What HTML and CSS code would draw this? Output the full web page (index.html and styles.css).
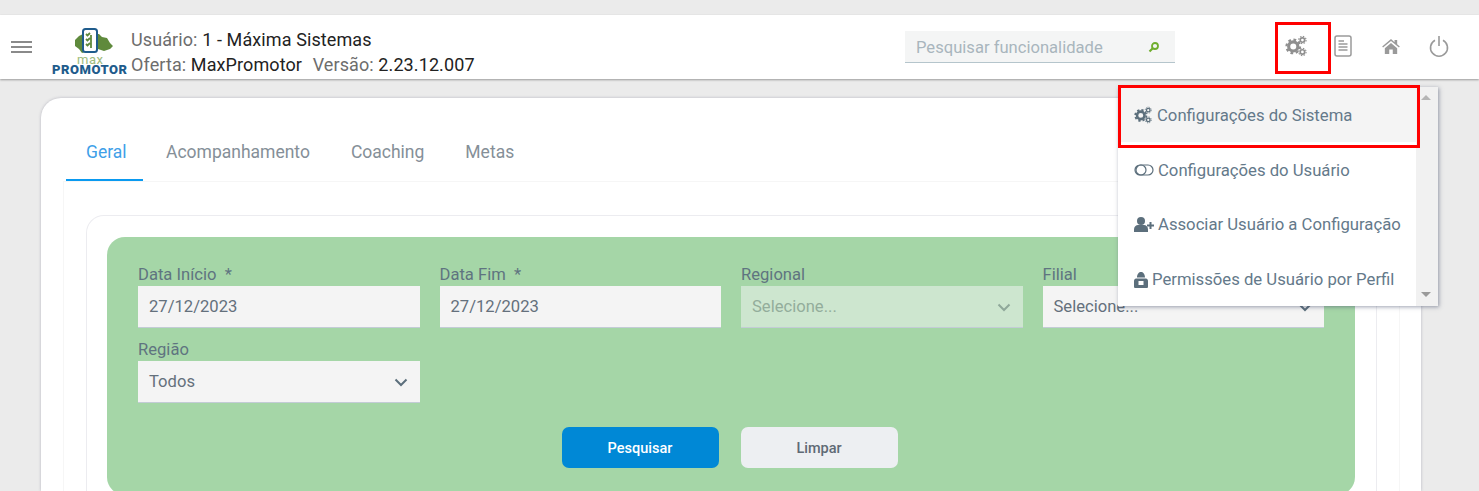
FILE: index.html
```html
<!DOCTYPE html>
<html lang="pt-BR">
<head>
  <meta charset="UTF-8">
  <title>MaxPromotor</title>
  <link rel="stylesheet" href="styles.css">
</head>
<body>
  <svg class="defs" width="0" height="0">
    <symbol id="gears" viewBox="0 0 24 24">
      <circle cx="9" cy="12.5" r="5" fill="none" stroke="currentColor" stroke-width="3.4"/>
      <circle cx="9" cy="12.5" r="7.4" fill="none" stroke="currentColor" stroke-width="2.4" stroke-dasharray="3 2.81"/>
      <circle cx="19" cy="5.5" r="2.4" fill="none" stroke="currentColor" stroke-width="1.8"/>
      <circle cx="19" cy="5.5" r="4" fill="none" stroke="currentColor" stroke-width="1.2" stroke-dasharray="1.6 1.54"/>
      <circle cx="19" cy="18.5" r="2.4" fill="none" stroke="currentColor" stroke-width="1.8"/>
      <circle cx="19" cy="18.5" r="4" fill="none" stroke="currentColor" stroke-width="1.2" stroke-dasharray="1.6 1.54"/>
    </symbol>
    <symbol id="chevron" viewBox="0 0 14 9">
      <path d="M1.5 1.5 7 7l5.500-5.500" fill="none" stroke="currentColor" stroke-width="2"/>
    </symbol>
  </svg>

  <header class="topbar">
    <div class="burger"><span></span><span></span><span></span></div>
    <svg class="logo" width="76" height="48" viewBox="0 0 76 48">
      <path d="M23 12l4-4 4-2h16l3 3 5 1 3 5 3 3-3 3-6 2-6-2-2 3H33l-3 1-3-4-4-3z" fill="#5f8a3c"/>
      <rect x="31" y="1" width="14" height="23" rx="2.500" fill="#fff" stroke="#1f5c8c" stroke-width="2"/>
      <path d="M34 6l1.500 1.500L38 5M34 11l1.500 1.500L38 10M34 16l1.500 1.500L38 15M39 7v13" fill="none" stroke="#5f8a3c" stroke-width="1.800"/>
      <text class="logo-text"><tspan class="logo-max" x="25" y="36" textLength="26">max</tspan><tspan class="logo-name" x="0" y="46" textLength="75">PROMOTOR</tspan></text>
    </svg>
    <div class="session">
      <p>Usuário: <b>1 - Máxima Sistemas</b></p>
      <p>Oferta: <b>MaxPromotor</b> <span class="version">Versão: <b>2.23.12.007</b></span></p>
    </div>
    <div class="search">
      <span>Pesquisar funcionalidade</span>
      <svg width="12" height="12" viewBox="0 0 12 12">
        <circle cx="7" cy="5" r="3" fill="none" stroke="#6fae2d" stroke-width="1.800"/>
        <path d="M5 7 1.500 10.500" stroke="#6fae2d" stroke-width="2.200"/>
      </svg>
    </div>
    <nav class="actions">
      <div class="action action-marked">
        <svg width="22" height="22"><use href="#gears"/></svg>
      </div>
      <div class="action">
        <svg width="18" height="22" viewBox="0 0 18 22">
          <rect x="1" y="1" width="16" height="20" rx="2" fill="none" stroke="currentColor" stroke-width="1.500"/>
          <path d="M4.500 6H10M4.500 9h9M4.500 12h9M4.500 15h9" stroke="currentColor" stroke-width="1.500"/>
        </svg>
      </div>
      <div class="action">
        <svg width="18" height="15" viewBox="0 0 20 17">
          <path d="M10 0 0 8.500l1 1.200L10 2.300l9 7.400 1-1.200-3-2.500V1h-3v2.800zM3 10.500V17h5v-5h4v5h5v-6.500L10 4.500z" fill="currentColor"/>
        </svg>
      </div>
      <div class="action">
        <svg width="20" height="21" viewBox="0 0 20 21">
          <path d="M6 4.200a8.500 8.500 0 1 0 8 0M10 0v10" fill="none" stroke="currentColor" stroke-width="1.600"/>
        </svg>
      </div>
    </nav>
  </header>

  <ul class="menu">
    <li class="menu-item menu-item-marked">
      <svg width="18" height="18"><use href="#gears"/></svg>Configurações do Sistema
    </li>
    <li class="menu-item">
      <svg width="20" height="12" viewBox="0 0 20 12">
        <rect x="1" y="1" width="18" height="10" rx="5" fill="none" stroke="currentColor" stroke-width="1.200"/>
        <circle cx="7" cy="6" r="5" fill="none" stroke="currentColor" stroke-width="1.200"/>
      </svg>Configurações do Usuário
    </li>
    <li class="menu-item">
      <svg width="20" height="15" viewBox="0 0 20 15">
        <circle cx="7" cy="4" r="4" fill="currentColor"/>
        <path d="M0 15v-2.500C0 9.500 2 8 4 8h6c2 0 4 1.500 4 4.500V15z" fill="currentColor"/>
        <path d="M13 8.500h7M16.500 5v7" stroke="currentColor" stroke-width="2"/>
      </svg>Associar Usuário a Configuração
    </li>
    <li class="menu-item">
      <svg width="14" height="16" viewBox="0 0 14 16">
        <path d="M3 5.500C3 2 5 0 7 0s4 2 4 5.500zM2 6.500h10c1 0 2 1 2 2.500v5.500c0 1-.5 1.500-1.500 1.500h-11C.5 16 0 15.500 0 14.500V9c0-1.500 1-2.500 2-2.500z" fill="currentColor"/>
        <rect x="4.500" y="9" width="5" height="4" fill="#fff"/>
      </svg>Permissões de Usuário por Perfil
    </li>
    <li class="menu-scroll"><i class="arrow-up"></i><i class="arrow-down"></i></li>
  </ul>

  <main class="card">
    <div class="tabs">
      <a class="tab tab-active">Geral</a>
      <a class="tab">Acompanhamento</a>
      <a class="tab">Coaching</a>
      <a class="tab">Metas</a>
    </div>
    <section class="pane">
      <div class="inner">
        <form class="filters">
          <div class="fields">
            <div class="field">
              <label>Data Início&nbsp; *</label>
              <div class="control">27/12/2023</div>
            </div>
            <div class="field">
              <label>Data Fim&nbsp; *</label>
              <div class="control">27/12/2023</div>
            </div>
            <div class="field">
              <label>Regional</label>
              <div class="control control-disabled">Selecione...
                <svg width="14" height="9"><use href="#chevron"/></svg>
              </div>
            </div>
            <div class="field">
              <label>Filial</label>
              <div class="control">Selecione...
                <svg width="14" height="9"><use href="#chevron"/></svg>
              </div>
            </div>
            <div class="field">
              <label>Região</label>
              <div class="control">Todos
                <svg width="14" height="9"><use href="#chevron"/></svg>
              </div>
            </div>
          </div>
          <div class="buttons">
            <button type="button" class="btn btn-primary">Pesquisar</button>
            <button type="button" class="btn">Limpar</button>
          </div>
        </form>
      </div>
    </section>
  </main>
</body>
</html>
```

FILE: styles.css
```css
* {
  box-sizing: border-box;
}

html, body {
  height: 491px;
  overflow: hidden;
}

body {
  margin: 0;
  padding-top: 15px;
  position: relative;
  background-color: #ebebeb;
  font-family: Roboto, "Liberation Sans", sans-serif;
  color: #6b7b86;
}

.defs {
  position: absolute;
}

.topbar {
  height: 64px;
  display: flex;
  align-items: center;
  background-color: #fff;
  box-shadow: 0 1px 2px rgba(0, 0, 0, 0.35);
  position: relative;
  z-index: 2;
}

.burger {
  width: 21px;
  margin-left: 11px;
  display: flex;
  flex-direction: column;
  gap: 3px;
}

.burger span {
  height: 2px;
  background-color: #8a8a8a;
}

.logo {
  flex: none;
  margin: 10px 0 0 20px;
}

.logo-text {
  font-size: 13px;
}

.logo-max {
  fill: #9dbb7c;
}

.logo-name {
  font-weight: 900;
  fill: #1f5c8c;
}

.session {
  margin-left: 3px;
  padding-top: 10px;
  font-size: 18px;
  letter-spacing: 0.1px;
  color: #6d6d6d;
}

.session p {
  margin: 0;
  line-height: 25px;
}

.session b {
  font-weight: 400;
  color: #222;
}

.version {
  margin-left: 6px;
}

.search {
  width: 270px;
  height: 32px;
  margin-left: auto;
  margin-top: -1px;
  padding: 2px 15px 0 11px;
  display: flex;
  align-items: center;
  justify-content: space-between;
  background-color: #f4f5f5;
  border-bottom: 1px solid #b5c5cc;
  font-size: 16.6px;
  color: #a9b5bd;
}

.actions {
  display: flex;
  align-items: center;
  width: 304px;
  padding-left: 96px;
}

.action {
  width: 48px;
  height: 52px;
  margin-top: -2px;
  flex: none;
  display: flex;
  align-items: center;
  justify-content: center;
  color: #9a9a9a;
}

.action-marked {
  width: 56px;
  margin: 2px -12px 0 4px;
  padding: 0 0 4px 7px;
  justify-content: flex-start;
  border: 3px solid #f00;
  color: #8f8f8f;
}

.menu {
  position: absolute;
  top: 87px;
  left: 1118px;
  width: 320px;
  height: 219px;
  margin: 0;
  padding: 0 22px 0 0;
  list-style: none;
  background-color: #fff;
  box-shadow: 1px 1px 4px rgba(60, 70, 100, 0.5);
  z-index: 3;
  font-size: 16.7px;
  color: #64798a;
}

.menu-item {
  height: 54.75px;
  padding: 2px 0 0 16px;
  display: flex;
  align-items: center;
  gap: 4px;
  white-space: nowrap;
}

.menu-item svg {
  flex: none;
  color: #5c6f7c;
}

.menu-item-marked {
  gap: 5px;
  background-color: #f4f4f4;
  position: relative;
}

.menu-item-marked::after {
  content: "";
  position: absolute;
  top: -2px;
  left: 0;
  right: -4px;
  bottom: -6px;
  border: 3px solid #f00;
  z-index: 1;
}

.menu-scroll {
  position: absolute;
  top: 0;
  right: 0;
  bottom: 0;
  width: 22px;
  background-color: #f1f1f1;
}

.arrow-up, .arrow-down {
  position: absolute;
  left: 5px;
  border-left: 5px solid transparent;
  border-right: 5px solid transparent;
}

.arrow-up {
  top: 8px;
  border-bottom: 5px solid #b5b5b5;
}

.arrow-down {
  bottom: 9px;
  border-top: 5px solid #9a9a9a;
}

.card {
  width: 1380px;
  height: 393px;
  margin: 19px 0 0 41px;
  padding: 32px 21px 0 22px;
  background-color: #fff;
  border-radius: 20px 20px 0 0;
  box-shadow: 0 0 3px rgba(80, 80, 110, 0.35);
  overflow: hidden;
}

.tabs {
  display: flex;
  gap: 1px;
  padding-left: 3px;
}

.tab {
  height: 51px;
  padding: 10px 20px 0;
  font-size: 17.5px;
  line-height: 24px;
  color: #858f98;
}

.tab-active {
  width: 77px;
  margin-right: 2px;
  color: #3f9fe8;
  border-bottom: 2px solid #0a9af0;
}

.pane {
  height: 310px;
  padding: 33px 22px 0;
  border: 1px solid #f6f6f6;
  border-bottom: 0;
  overflow: hidden;
}

.inner {
  height: 290px;
  padding: 21px 21px 0 20px;
  border: 1px solid #ececf0;
  border-bottom: 0;
  border-radius: 18px 18px 0 0;
}

.filters {
  height: 258px;
  padding: 27px 31px 0;
  background-color: #a5d6a7;
  border-radius: 18px;
}

.fields {
  display: grid;
  grid-template-columns: repeat(4, 1fr);
  column-gap: 20px;
  row-gap: 11px;
}

.field label {
  display: block;
  font-size: 16.6px;
  line-height: 22px;
  color: #5f7480;
}

.control {
  height: 42px;
  padding: 0 11px;
  display: flex;
  align-items: center;
  justify-content: space-between;
  background-color: #f4f4f4;
  border-bottom: 1px solid #c3ccd6;
  font-size: 16.6px;
  color: #64707c;
}

.control svg {
  color: #5c6f7c;
  margin: 2px 1px 0 0;
}

.control-disabled {
  background-color: #cde6cf;
  color: #93ad9b;
}

.control-disabled svg {
  color: #8fa89a;
}

.buttons {
  display: flex;
  justify-content: center;
  gap: 22px;
  margin-top: 24px;
  padding-right: 3px;
}

.btn {
  width: 157px;
  height: 41px;
  padding-top: 2px;
  border: none;
  border-radius: 7px;
  background-color: #edeff2;
  font-family: Roboto, "Liberation Sans", sans-serif;
  font-size: 14.5px;
  font-weight: 500;
  color: #5f6a75;
}

.btn-primary {
  background-color: #0088d6;
  color: #fff;
}
```
